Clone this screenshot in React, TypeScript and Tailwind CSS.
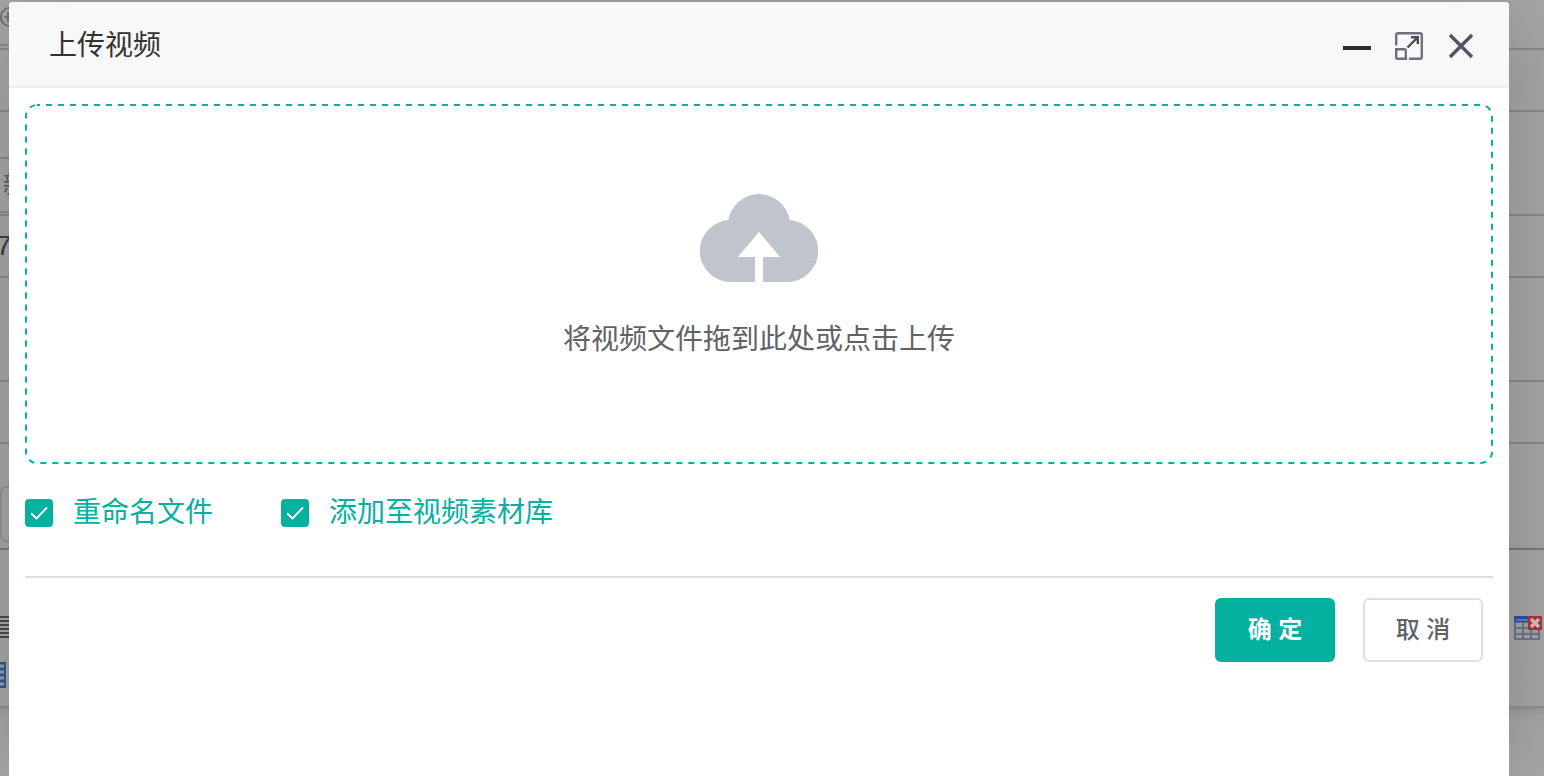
import React, { useState } from "react";

function CloudUpload() {
  return (
    <svg width="118" height="88" viewBox="0 0 118 88" fill="#c0c4cc" aria-hidden="true">
      <path d="M28.4 26.1A31 31 0 0 1 89.6 26.1A31 31 0 0 1 86.5 88H63V63H80L59 38L38 63H55V88H31.5A31 31 0 0 1 28.4 26.1Z" />
    </svg>
  );
}

function DashedFrame() {
  return (
    <svg className="pointer-events-none absolute inset-0 size-full" fill="none" aria-hidden="true">
      <rect
        x="1"
        y="1"
        rx="11"
        className="h-[calc(100%-2px)] w-[calc(100%-2px)]"
        stroke="#04b09f"
        strokeWidth="2"
        strokeDasharray="6 6"
        strokeDashoffset="3"
      />
    </svg>
  );
}

function Checkbox({ label }: { label: string }) {
  const [checked, setChecked] = useState(true);
  return (
    <label className="flex cursor-pointer items-center gap-5 text-[28px] leading-10 text-[#04b09f]">
      <span className="grid size-7">
        <input
          type="checkbox"
          checked={checked}
          onChange={(e) => setChecked(e.target.checked)}
          className="peer col-start-1 row-start-1 size-7 appearance-none rounded border-2 border-[#dcdfe6] bg-white checked:border-[#04b09f] checked:bg-[#04b09f]"
        />
        <svg
          viewBox="0 0 28 28"
          className="pointer-events-none invisible col-start-1 row-start-1 size-7 peer-checked:visible"
          fill="none"
          stroke="#fff"
          strokeWidth="2"
          aria-hidden="true"
        >
          <path d="M6 14.2L11.6 19.4L22 8.4" />
        </svg>
      </span>
      <span>{label}</span>
    </label>
  );
}

function PageBehind() {
  const line = "shrink-0 border-b-2 border-[#89898f]";
  return (
    <div aria-hidden="true" className="absolute inset-0 flex flex-col overflow-hidden bg-[#a8a8a8]">
      <div className={`${line} h-[50px]`}>
        <div className="h-[46px] w-1/2 border-b-2 border-[#8a8a8a] pt-[7px]">
          <svg width="20" height="20" viewBox="0 0 20 20" fill="none" stroke="#666668" strokeWidth="1.6">
            <circle cx="10" cy="10" r="9.2" />
            <path d="M4 10H16M8 5V15" />
          </svg>
        </div>
      </div>
      <div className={`${line} h-[62px]`} />
      <div className={`${line} flex h-[104px] items-end`}>
        <div className="mb-px flex h-14 w-1/2 items-center border-y-2 border-[#8a8a8a] pl-[3px] text-2xl text-[#58585a]">
          新
        </div>
      </div>
      <div className={`${line} flex h-[62px] items-center`}>
        <span className="-ml-1 text-[28px] text-[#3c3d40]">7</span>
      </div>
      <div className={`${line} h-[104px]`} />
      <div className={`${line} h-[62px]`} />
      <div className="flex h-[106px] shrink-0 items-end border-b-2 border-[#828282] pb-1.5">
        <div className="h-14 w-1/2 rounded-md border-2 border-[#929292]" />
      </div>
      <div className="flex h-[158px] shrink-0 justify-between border-b-2 border-[#929292] shadow-[0_2px_10px_rgba(0,0,0,0.15)]">
        <div className="pt-[65px]">
          <svg width="10" height="24" viewBox="0 0 10 24" stroke="#4c4c4c" strokeWidth="2">
            <path d="M0 2H10M0 6H10M0 10H10M0 14H10M0 18H10M0 22H10" />
          </svg>
          <svg width="7" height="28" viewBox="0 0 7 28" className="mt-[22px]">
            <path d="M0 1H6V27H0Z" fill="#345a8c" />
            <path d="M0 5H4M0 11H4M0 17H4M0 23H4" stroke="#96a3b5" strokeWidth="3" />
          </svg>
        </div>
        <div className="pt-[65px] pr-0.5">
          <svg width="28" height="26" viewBox="0 0 28 26">
            <path d="M0 2H26V25H0Z" fill="#6b778c" />
            <path d="M0 1H26V7H0Z" fill="#344da4" />
            <path d="M2 5H14" stroke="#5f80bf" strokeWidth="2" />
            <path
              d="M2 8H8V12H2ZM10 8H16V12H10ZM18 8H24V12H18ZM2 14H8V18H2ZM10 14H16V18H10ZM18 14H24V18H18ZM2 20H8V23H2ZM10 20H16V23H10ZM18 20H24V23H18Z"
              fill="#a8a8aa"
            />
            <rect x="14" y="1" width="14" height="14" rx="1" fill="#b03436" />
            <path d="M17 4L25 12M25 4L17 12" stroke="#ccc4c4" strokeWidth="3.4" />
          </svg>
        </div>
      </div>
    </div>
  );
}

export default function App() {
  return (
    <div className="relative flex min-h-screen flex-col overflow-hidden pt-0.5 pr-[35px] pl-[9px] font-['Liberation_Sans','Noto_Sans_CJK_SC',sans-serif]">
      <PageBehind />
      <section
        role="dialog"
        aria-labelledby="dialog-title"
        className="relative flex grow flex-col rounded-t bg-white shadow-[2px_2px_100px_rgba(0,0,0,0.2)]"
      >
        <header className="flex h-[86px] items-center justify-between rounded-t border-b-2 border-[#eee] bg-[#f8f8f8] pr-8 pl-10">
          <h1 id="dialog-title" className="pt-1 text-[28px] leading-10 text-[#333]">
            上传视频
          </h1>
          <div className="flex items-center gap-5 pt-1">
            <button type="button" aria-label="最小化" className="grid size-8 place-items-center">
              <svg width="28" height="28" viewBox="0 0 28 28" aria-hidden="true">
                <path d="M0 14H28V18H0Z" fill="#2e2d3c" />
              </svg>
            </button>
            <button type="button" aria-label="最大化" className="grid size-8 place-items-center">
              <svg width="28" height="28" viewBox="0 0 28 28" fill="none" stroke="#716f7e" strokeWidth="2.4" aria-hidden="true">
                <path d="M1.2 13.5V3Q1.2 1.2 3 1.2H25Q26.8 1.2 26.8 3V25Q26.8 26.8 25 26.8H14" />
                <path d="M1.2 17.2H9.5Q10.8 17.2 10.8 18.5V26.8H2.5Q1.2 26.8 1.2 25.5Z" />
                <path d="M12.5 15.5L22 6" stroke="#4b4a59" />
                <path d="M16 5.2H22.8V12" stroke="#4b4a59" />
              </svg>
            </button>
            <button type="button" aria-label="关闭" className="grid size-8 place-items-center">
              <svg width="28" height="28" viewBox="0 0 28 28" fill="none" stroke="#555361" strokeWidth="3.4" aria-hidden="true">
                <path d="M3 3L25 25M25 3L3 25" />
              </svg>
            </button>
          </div>
        </header>

        <div className="px-4 pt-4">
          <button
            type="button"
            className="relative flex h-[360px] w-full cursor-pointer flex-col items-center gap-[38px] rounded-xl pt-[90px] text-[28px] leading-10 text-[#606266]"
          >
            <DashedFrame />
            <CloudUpload />
            <span>将视频文件拖到此处或点击上传</span>
          </button>

          <div className="flex gap-[68px] pt-[29px] pb-[43px]">
            <Checkbox label="重命名文件" />
            <Checkbox label="添加至视频素材库" />
          </div>

          <footer className="flex justify-end gap-7 border-t-2 border-[#dcdfe6] px-2.5 pt-5">
            <button
              type="button"
              className="h-16 w-[120px] rounded-md bg-[#04b09f] text-2xl font-bold text-white"
            >
              确 定
            </button>
            <button
              type="button"
              className="h-16 w-[120px] rounded-md border-2 border-[#dcdfe6] bg-white text-2xl font-medium text-[#606266]"
            >
              取 消
            </button>
          </footer>
        </div>
      </section>
    </div>
  );
}
